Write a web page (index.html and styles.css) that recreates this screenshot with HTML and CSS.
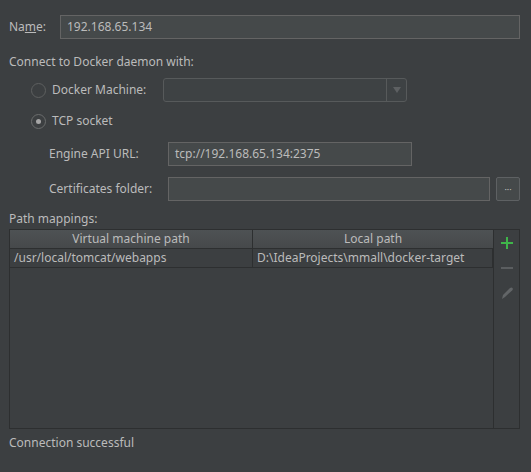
FILE: index.html
```html
<!DOCTYPE html>
<html>
<head>
<meta charset="utf-8">
<link rel="stylesheet" href="styles.css">
</head>
<body>
<div class="dialog">
  <div class="row name-row">
    <span class="label name-label">Na<u>m</u>e:</span>
    <div class="field name-field">192.168.65.134</div>
  </div>
  <div class="section-title connect">Connect to Docker daemon with:</div>
  <div class="row radio-row dm-row">
    <span class="radio"></span>
    <span class="label">Docker Machine:</span>
    <div class="combo">
      <div class="combo-text"></div>
      <div class="combo-btn"><span class="arrow"></span></div>
    </div>
  </div>
  <div class="row radio-row tcp-row">
    <span class="radio checked"><span class="dot"></span></span>
    <span class="label">TCP socket</span>
  </div>
  <div class="row sub-row engine-row">
    <span class="label sub-label">Engine API URL:</span>
    <div class="field url-field">tcp://192.168.65.134:2375</div>
  </div>
  <div class="row sub-row cert-row">
    <span class="label sub-label">Certificates folder:</span>
    <div class="field cert-field"></div>
    <div class="browse">···</div>
  </div>
  <div class="section-title pm">Path mappings:</div>
  <div class="table-wrap">
    <div class="table">
      <div class="thead">
        <div class="th th1">Virtual machine path</div>
        <div class="th th2">Local path</div>
      </div>
      <div class="tr">
        <div class="td td1">/usr/local/tomcat/webapps</div>
        <div class="td td2">D:\IdeaProjects\mmall\docker-target</div>
      </div>
    </div>
    <div class="toolbar">
      <svg class="tool" width="14" height="14" viewBox="0 0 14 14"><rect x="6" y="1" width="2" height="12" fill="#3fb54a"/><rect x="1" y="6" width="12" height="2" fill="#3fb54a"/></svg>
      <svg class="tool" width="14" height="14" viewBox="0 0 14 14"><rect x="1" y="6" width="12" height="2" fill="#5b5e60"/></svg>
      <svg class="tool" width="14" height="14" viewBox="0 0 14 14"><path d="M2 13 L3 9 L10 2 Q11.5 1 12.5 2 Q13.2 3 12.3 4.2 L5 11 Z" fill="#626567"/></svg>
    </div>
  </div>
  <div class="status">Connection successful</div>
</div>
</body>
</html>
```
FILE: styles.css
```css
html, body {
  margin: 0;
  padding: 0;
  background: #3c3f41;
}
body {
  width: 531px;
  height: 472px;
  overflow: hidden;
  font-family: "Noto Sans", "Liberation Sans", sans-serif;
  font-size: 12px;
  color: #bbbbbb;
}
.dialog {
  display: flex;
  flex-direction: column;
  padding: 15px 11px 0 9px;
}
.row {
  display: flex;
  align-items: center;
}
.label {
  white-space: nowrap;
  line-height: 16px;
}
.field {
  box-sizing: border-box;
  height: 24px;
  background: #45494a;
  border: 1px solid #646464;
  padding: 0 6px;
  line-height: 22px;
  color: #bbbbbb;
  white-space: nowrap;
}
.name-row { height: 24px; }
.name-label { width: 51px; }
.name-field { width: 460px; }
.section-title {
  line-height: 16px;
}
.connect { margin-top: 15px; }
.radio-row { padding-left: 22px; }
.radio {
  box-sizing: border-box;
  width: 15px;
  height: 15px;
  border-radius: 50%;
  border: 1px solid #5e6060;
  background: #3c3f41;
  margin-right: 6px;
  display: flex;
  align-items: center;
  justify-content: center;
}
.radio.checked { border-color: #6b6d6d; }
.dot {
  width: 5px;
  height: 5px;
  border-radius: 50%;
  background: #a6a6a6;
}
.dm-row { margin-top: 8px; height: 24px; }
.dm-row .label { width: 111px; }
.combo {
  box-sizing: border-box;
  width: 244px;
  height: 24px;
  border: 1px solid #575a5b;
  border-radius: 3px;
  display: flex;
  background: #3e4244;
}
.combo-text { flex: 1; }
.combo-btn {
  width: 19px;
  border-left: 1px solid #575a5b;
  display: flex;
  align-items: center;
  justify-content: center;
}
.arrow {
  width: 0;
  height: 0;
  border-left: 4px solid transparent;
  border-right: 4px solid transparent;
  border-top: 6px solid #5d6062;
}
.tcp-row { margin-top: 7px; height: 24px; }
.sub-row { padding-left: 40px; height: 24px; }
.sub-label { width: 119px; }
.engine-row { margin-top: 9px; }
.url-field { width: 244px; }
.cert-row { margin-top: 11px; }
.cert-field { width: 322px; }
.browse {
  box-sizing: border-box;
  width: 24px;
  height: 24px;
  margin-left: 6px;
  border: 1px solid #5e6163;
  border-radius: 2px;
  background: #45494a;
  display: flex;
  align-items: center;
  justify-content: center;
  font-size: 9px;
  color: #bbbbbb;
  letter-spacing: 0;
}
.pm { margin-top: 10px; }
.table-wrap {
  margin-top: 2px;
  display: flex;
  height: 200px;
}
.table {
  box-sizing: border-box;
  width: 487px;
  border: 1px solid #2d2f30;
  border-right: none;
  background: #3c3f41;
}
.thead {
  display: flex;
  height: 18px;
  background: linear-gradient(#4e5254, #46494b);
  border-bottom: 1px solid #2d2f30;
}
.th {
  box-sizing: border-box;
  text-align: center;
  line-height: 18px;
  color: #bbbbbb;
}
.th1 { width: 243px; border-right: 1px solid #2d2f30; }
.th2 { flex: 1; }
.tr {
  display: flex;
  height: 18px;
  border-bottom: 1px solid #2d2f30;
}
.td {
  box-sizing: border-box;
  line-height: 18px;
  padding-left: 4px;
  white-space: nowrap;
}
.td1 { width: 243px; border-right: 1px solid #2d2f30; }
.td2 { flex: 1; border-right: 1px solid #2d2f30; }
.toolbar {
  box-sizing: border-box;
  width: 27px;
  border: 1px solid #2d2f30;
  display: flex;
  flex-direction: column;
  align-items: center;
  padding-top: 6px;
  gap: 11px;
}
.tool { display: block; }
.status {
  margin-top: 6px;
  line-height: 16px;
}
```
